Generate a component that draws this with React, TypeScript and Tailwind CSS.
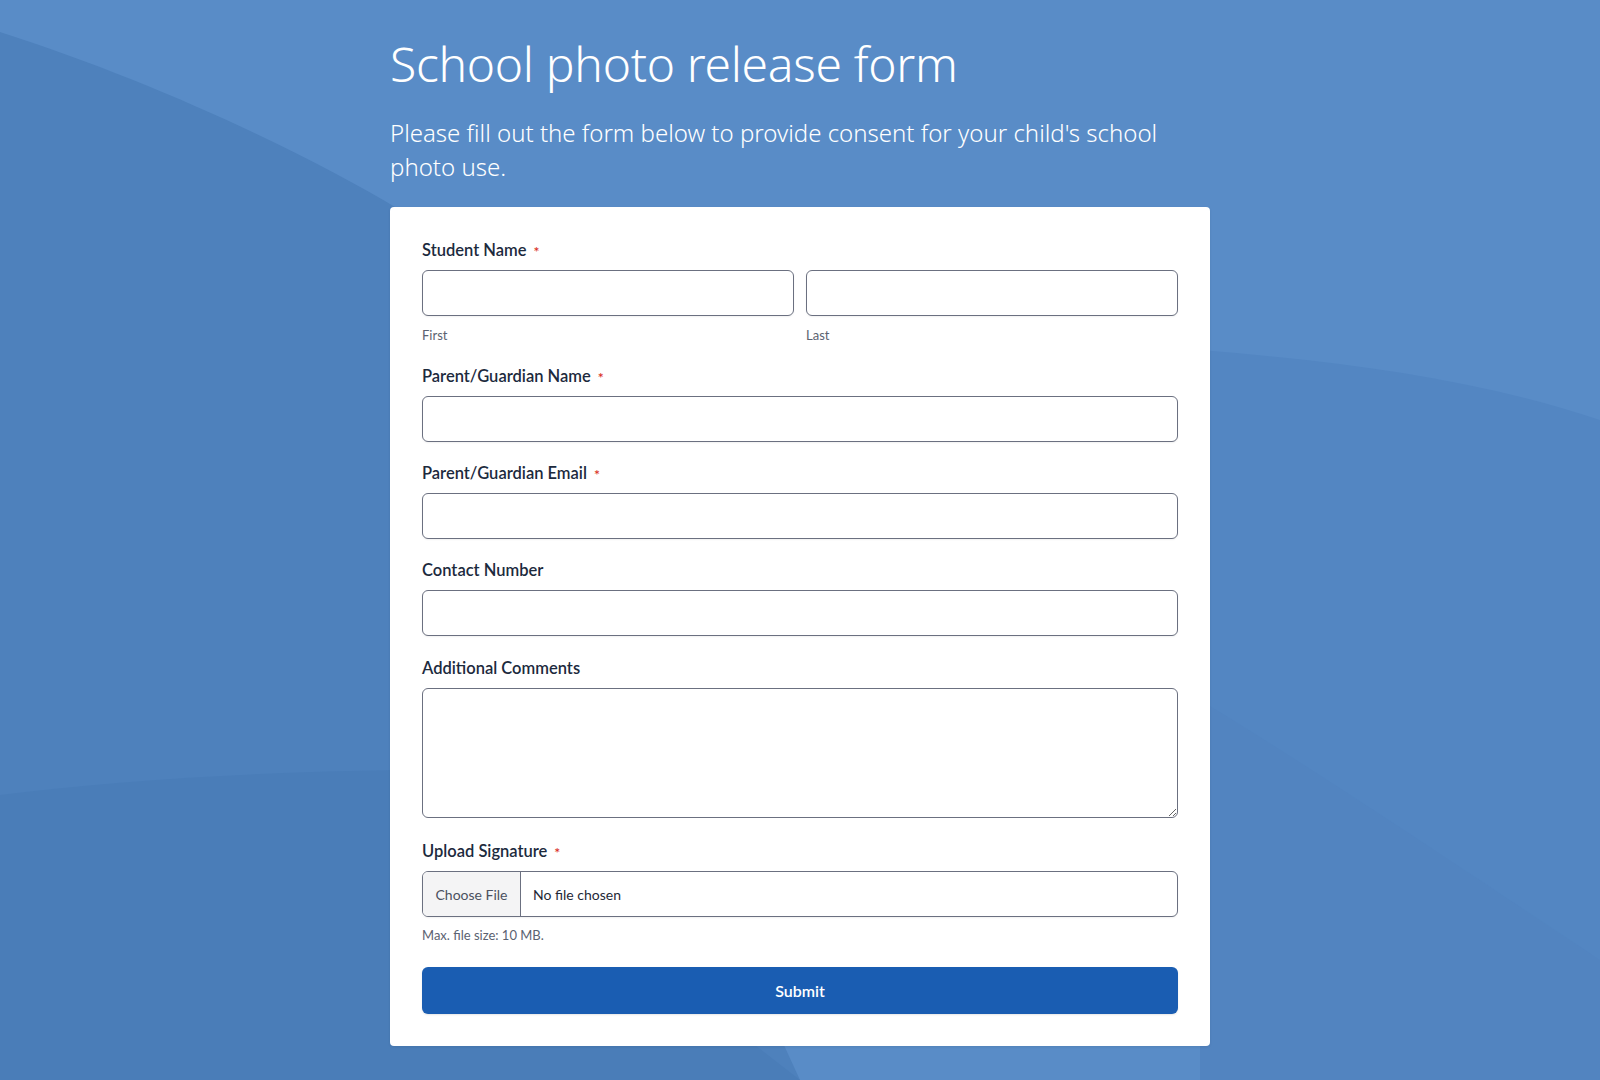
import React from "react";

const Req = () => (
  <span className="relative top-[2px] ml-[7px] text-[14px] leading-none text-[#d93025]">*</span>
);

function Label({ children, required }: { children: React.ReactNode; required?: boolean }) {
  return (
    <div className="mb-[10px] flex items-center text-[16.5px] leading-5 font-semibold text-[#1c2a3d]">
      <span>{children}</span>
      {required && <Req />}
    </div>
  );
}

const inputCls =
  "block w-full h-[46px] rounded-[6px] border border-[#6b7080] bg-white px-3 text-[14px] text-[#1f2937] outline-none shadow-[0_1px_2px_rgba(0,0,0,0.06)]";

export default function App() {
  return (
    <div
      className="relative h-[1080px] w-full overflow-hidden bg-[#598cc7]"
      style={{ fontFamily: "Lato, 'Noto Sans', sans-serif" }}
    >
      <svg
        className="absolute inset-0 h-[1080px] w-[1600px]"
        viewBox="0 0 1600 1080"
        preserveAspectRatio="none"
      >
        <path d="M0 32 C 150 80, 300 150, 400 210 L 800 1080 L 0 1080 Z" fill="#4e81bc" />
        <path d="M1200 350 C 1350 362, 1480 380, 1600 420 L 1600 1080 L 1200 1080 Z" fill="#5386c2" />
        <path d="M1200 700 C 1300 760, 1450 860, 1600 960 L 1600 1080 L 1200 1080 Z" fill="#5284c0" />
        <path d="M0 795 C 120 780, 260 772, 400 770 L 800 1080 L 0 1080 Z" fill="#4a7db8" />
      </svg>

      <div className="relative mx-auto w-[820px] pt-[32px]">
        <h1
          className="text-[48px] leading-[64px] text-white tracking-[-0.3px]"
          style={{ fontFamily: "'Noto Sans', Lato, sans-serif", fontWeight: 300 }}
        >
          School photo release form
        </h1>
        <p
          className="mt-[20px] w-[790px] text-[24px] leading-[34px] text-white"
          style={{ fontFamily: "'Noto Sans', Lato, sans-serif", fontWeight: 300 }}
        >
          Please fill out the form below to provide consent for your child's school photo use.
        </p>

        <div className="mt-[23px] rounded-[4px] bg-white px-8 pt-[33px] pb-8 shadow-[0_1px_3px_rgba(0,0,0,0.08)]">
          <div className="mb-[22px]">
            <Label required>Student Name</Label>
            <div className="grid grid-cols-2 gap-3">
              <div>
                <input className={inputCls} />
                <div className="mt-[10px] text-[13px] leading-[18px] text-[#5b6271]">First</div>
              </div>
              <div>
                <input className={inputCls} />
                <div className="mt-[10px] text-[13px] leading-[18px] text-[#5b6271]">Last</div>
              </div>
            </div>
          </div>

          <div className="mb-[21px]">
            <Label required>Parent/Guardian Name</Label>
            <input className={inputCls} />
          </div>

          <div className="mb-[21px]">
            <Label required>Parent/Guardian Email</Label>
            <input className={inputCls} type="email" />
          </div>

          <div className="mb-[22px]">
            <Label>Contact Number</Label>
            <input className={inputCls} />
          </div>

          <div className="mb-[23px]">
            <Label>Additional Comments</Label>
            <textarea className="block h-[130px] w-full resize-y rounded-[6px] border border-[#6b7080] bg-white px-3 py-2 text-[14px] outline-none" />
          </div>

          <div className="mb-[23px]">
            <Label required>Upload Signature</Label>
            <div className="flex h-[46px] w-full overflow-hidden rounded-[6px] border border-[#6b7080] bg-white shadow-[0_1px_2px_rgba(0,0,0,0.06)]">
              <div className="flex w-[98px] items-center justify-center border-r border-[#6b7080] bg-[#f4f4f5] text-[14px] text-[#4b5160]">
                Choose File
              </div>
              <div className="flex items-center pl-3 text-[14px] text-[#1f2937] pt-[1px]">No file chosen</div>
            </div>
            <div className="mt-[9px] text-[13px] leading-[18px] text-[#5b6271]">Max. file size: 10 MB.</div>
          </div>

          <button className="flex h-[47px] w-full items-center justify-center rounded-[6px] bg-[#1a5db2] text-[16px] font-semibold text-white shadow-[0_1px_2px_rgba(0,0,0,0.1)]">
            Submit
          </button>
        </div>
      </div>
    </div>
  );
}
